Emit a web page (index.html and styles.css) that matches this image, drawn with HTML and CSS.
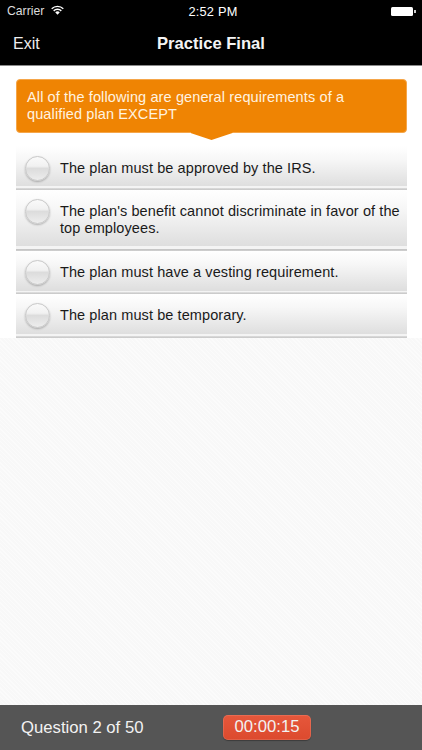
FILE: index.html
```html
<!DOCTYPE html>
<html lang="en">
<head>
<meta charset="utf-8">
<title>Practice Final</title>
<link rel="stylesheet" href="styles.css">
</head>
<body>
<div class="screen">
  <header class="top">
    <div class="status">
      <div class="status-left">
        <span>Carrier</span>
        <svg class="wifi" width="13" height="10" viewBox="0 0 13 10"><path d="M0.2 3.2A9 9 0 0 1 12.8 3.2L11.8 4.3A7.5 7.5 0 0 0 1.200 4.300Z M2.200 5.300A6.200 6.200 0 0 1 10.800 5.300L9.800 6.400A4.700 4.700 0 0 0 3.200 6.400Z M4.200 7.300A3.300 3.300 0 0 1 8.800 7.300L6.500 9.800Z" fill="#fff"/></svg>
      </div>
      <div class="status-time">2:52 PM</div>
      <div class="status-right">
        <span class="battery"></span><span class="battery-tip"></span>
      </div>
    </div>
    <nav class="nav">
      <span class="exit">Exit</span>
      <span class="title">Practice Final</span>
    </nav>
  </header>
  <main class="content">
    <section class="quiz">
      <div class="question">All of the following are general requirements of a qualified plan EXCEPT</div>
      <div class="pointer"></div>
      <ul class="options">
        <li class="option first"><span class="radio"></span><span class="label">The plan must be approved by the IRS.</span></li>
        <li class="option tall"><span class="radio"></span><span class="label">The plan's benefit cannot discriminate in favor of the top employees.</span></li>
        <li class="option third"><span class="radio"></span><span class="label">The plan must have a vesting requirement.</span></li>
        <li class="option"><span class="radio"></span><span class="label">The plan must be temporary.</span></li>
      </ul>
    </section>
    <div class="blank"></div>
  </main>
  <footer class="bottom">
    <span class="progress">Question 2 of 50</span>
    <span class="timer">00:00:15</span>
  </footer>
</div>
</body>
</html>
```
FILE: styles.css
```css
* { box-sizing: border-box; }
html, body { margin: 0; padding: 0; }
body { font-family: "Liberation Sans", Arial, sans-serif; background: #fff; }
.screen { width: 422px; height: 750px; display: flex; flex-direction: column; overflow: hidden; }

.top { height: 66px; background: #000; border-bottom: 1px solid #8a8a8a; color: #fff; flex: none; }
.status { height: 22px; padding: 0 6px 0 7px; display: grid; grid-template-columns: 1fr auto 1fr; align-items: center; font-size: 12.200px; }
.status-left { display: flex; align-items: center; gap: 7px; color: #ddd; }
.wifi { margin-top: -2px; }
.status-time { font-size: 12.800px; letter-spacing: 0.2px; margin-left: 3px; }
.status-right { display: flex; justify-content: flex-end; align-items: center; }
.battery { width: 22px; height: 9px; background: #fff; border-radius: 1.500px; }
.battery-tip { width: 2px; height: 3px; background: #ccc; margin-left: 1px; }
.nav { height: 43px; padding: 0 13px; position: relative; display: flex; align-items: center; }
.exit { font-size: 16px; color: #eee; }
.title { position: absolute; left: 0; right: 0; text-align: center; font-weight: 700; font-size: 16.600px; color: #f4f4f4; }

.content { flex: 1; display: flex; flex-direction: column; min-height: 0; }
.quiz { padding: 13px 15px 0 16px; background: #fff; height: 272px; flex: none; }
.question { height: 54px; background: #ef8403; border: 1px solid #f5a64a; border-radius: 4px; color: #fff3e0; font-size: 14.500px; line-height: 17px; padding: 9px 10px; letter-spacing: 0.12px; }
.pointer { width: 42px; height: 8px; margin: -1px auto 0; background: #ef8403; clip-path: polygon(0 0, 100% 0, 100% 12%, 50% 100%, 0 12%); }
.options { list-style: none; margin: 6px 0 0; padding: 0; }
.option { height: 43.500px; padding: 0 0 0 8.500px; display: flex; align-items: center; gap: 10.500px; background: linear-gradient(#fff 0, #f7f7f7 30%, #dedede 92%, #f4f4f4 92%, #f4f4f4 96%, #c4c4c4 97%, #d0d0d0 100%); }
.option.first { padding-top: 2px; }
.option.third { padding-top: 1px; }
.option.tall { height: 61px; align-items: flex-start; padding-top: 13px; }
.radio { width: 25px; height: 25px; flex: none; border-radius: 50%; border: 1px solid #c8c8c8; background: linear-gradient(#fafafa 0, #f1f1f1 40%, #dcdcdc 50%, #ededed 100%); box-shadow: 0 1px 2px rgba(0,0,0,.25); }
.tall .radio { margin-top: -4px; }
.label { font-size: 14.500px; line-height: 17px; color: #1a1a1a; letter-spacing: 0.09px; }

.blank { flex: 1; background-color: #f9f9f9; background-image: repeating-linear-gradient(45deg, #fbfbfb 0 1px, #f8f8f8 1px 3px); }
.bottom { height: 45px; flex: none; background: #555; display: flex; align-items: center; padding: 0 0 0 21px; color: #f2f2f2; font-size: 16.700px; }
.progress { width: 202px; }
.timer { width: 88px; height: 25px; margin-top: -1px; border-radius: 5px; background: linear-gradient(#e6573b, #dc4a2e); box-shadow: inset 0 0 0 1px rgba(255,255,255,.12), 0 1px 1px rgba(0,0,0,.3); display: flex; align-items: center; justify-content: center; }
```
